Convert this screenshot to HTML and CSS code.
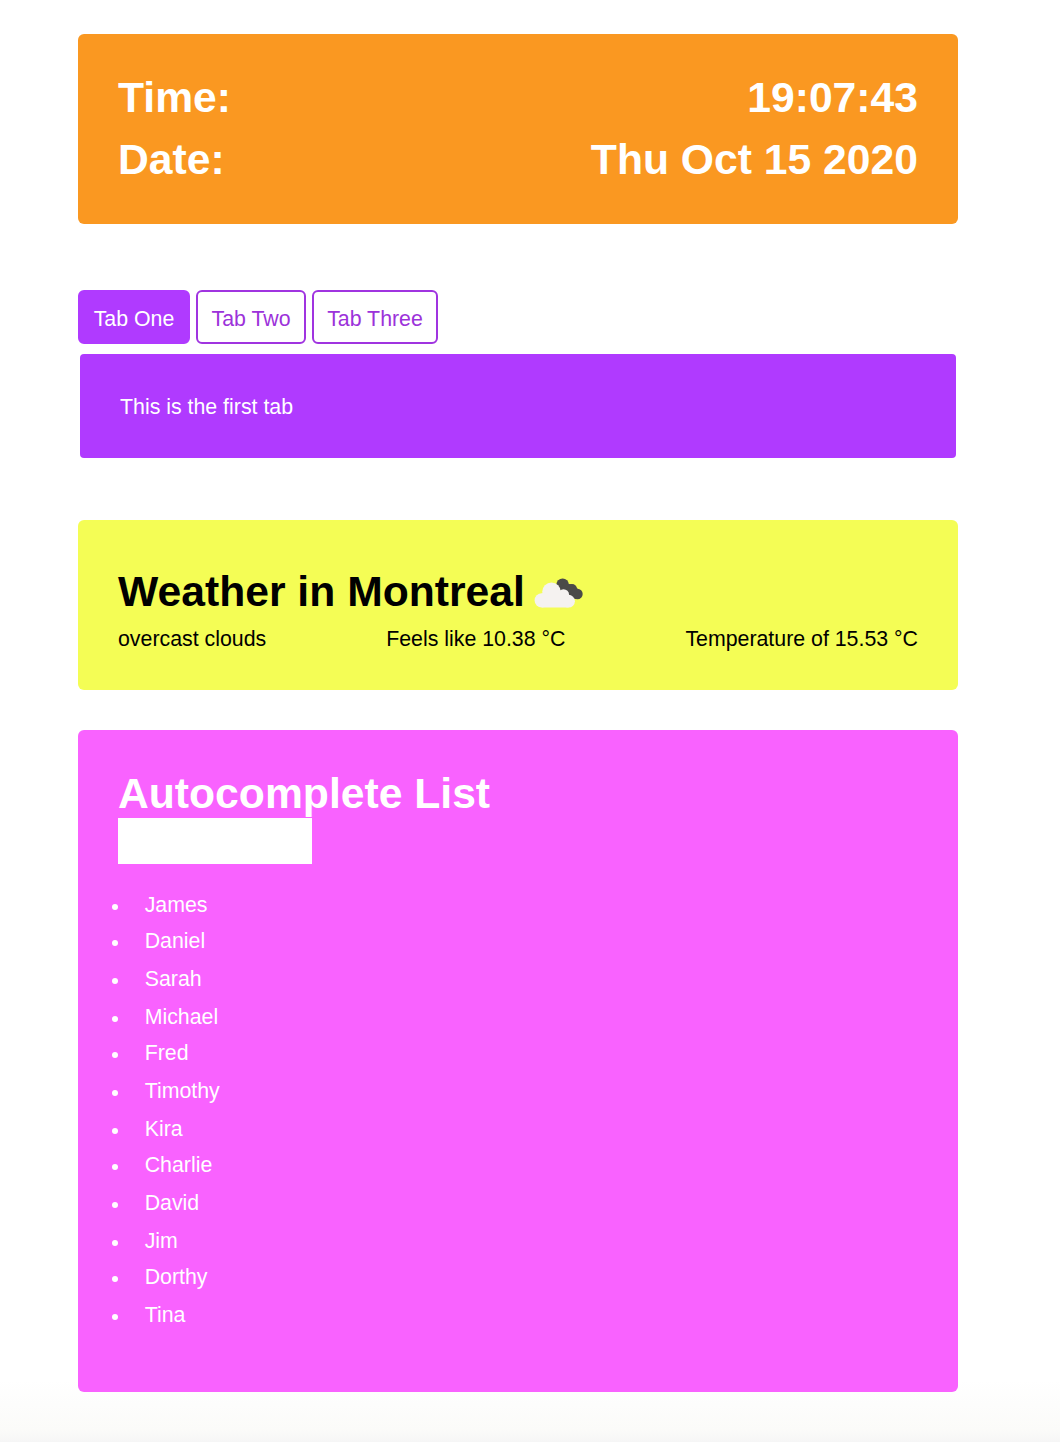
FILE: index.html
```html
<!DOCTYPE html>
<html lang="en">
<head>
<meta charset="utf-8">
<title>Widgets</title>
<link rel="stylesheet" href="styles.css">
</head>
<body>
<main class="page">
  <section class="card clock">
    <div class="clock-row"><span>Time:</span><span>19:07:43</span></div>
    <div class="clock-row"><span>Date:</span><span>Thu Oct 15 2020</span></div>
  </section>

  <section class="tabs">
    <div class="tab-list">
      <button class="tab tab-one active">Tab One</button>
      <button class="tab tab-two">Tab Two</button>
      <button class="tab tab-three">Tab Three</button>
    </div>
    <div class="tab-panel">This is the first tab</div>
  </section>

  <section class="card weather">
    <h1 class="weather-title"><span>Weather in Montreal</span>
      <svg class="cloud" viewBox="0 0 50 32" width="50" height="32">
        <g fill="#4b4a48"><circle cx="28.6" cy="7.8" r="6.3"/><circle cx="38" cy="12" r="5"/><circle cx="43.5" cy="17" r="5.2"/><path d="M30 6L38 7.5L44 12V22H41L26 12Z"/></g>
        <g fill="#f5f2f0"><circle cx="7.8" cy="23.4" r="7.2"/><circle cx="17.5" cy="14.8" r="9.3"/><circle cx="29.5" cy="17.8" r="5.6"/><circle cx="34.5" cy="24.2" r="6.4"/><path d="M7.8 16.2H30L34.5 22V30.6H7.8Z"/></g>
      </svg>
    </h1>
    <div class="weather-row">
      <span>overcast clouds</span><span>Feels like 10.38 °C</span><span>Temperature of 15.53 °C</span>
    </div>
  </section>

  <section class="card autocomplete">
    <h1 class="list-title">Autocomplete List</h1>
    <input class="search" type="text" aria-label="Name">
    <ul class="names">
      <li>James</li><li>Daniel</li><li>Sarah</li><li>Michael</li><li>Fred</li><li>Timothy</li>
      <li>Kira</li><li>Charlie</li><li>David</li><li>Jim</li><li>Dorthy</li><li>Tina</li>
    </ul>
  </section>
</main>
</body>
</html>
```
FILE: styles.css
```css
* { box-sizing: border-box; }

body {
  margin: 0;
  height: 1442px;
  background: linear-gradient(#fff 1380px, #fbfbf9 1430px, #f6f6f6 1442px);
  font: 21.33px/37px "Liberation Sans", Arial, sans-serif;
}

.page { width: 880px; margin-left: 78px; padding-top: 34px; }

.card { border-radius: 6px; padding: 0 40px; }

h1, .clock {
  margin: 0;
  font-size: 42.67px;
  font-weight: bold;
}

.clock {
  height: 190px;
  padding-top: 32px;
  background: #fa9821;
  color: #fff;
  line-height: 62px;
}

.clock-row, .weather-row { display: flex; justify-content: space-between; }

.tabs { margin-top: 66px; }

.tab-list { display: flex; gap: 6px; }

.tab {
  height: 54px;
  padding: 9px 0 4px;
  border: 2px solid #a034e0;
  border-radius: 6px;
  background: #fff;
  color: #9c32da;
  font: inherit;
  line-height: 37px;
}
.tab-one { width: 112px; }
.tab-two { width: 110px; }
.tab-three { width: 126px; }
.tab.active { background: #b03aff; border-color: #b03aff; color: #fff; }

.tab-panel {
  height: 104px;
  margin: 10px 2px 0;
  padding: 35px 40px 0;
  border-radius: 4px;
  background: #b03aff;
  color: #fff;
}

.weather {
  height: 170px;
  margin-top: 62px;
  padding-top: 47px;
  background: #f4fd55;
  color: #000;
}

.weather-title { display: flex; gap: 9px; line-height: 48px; }
.cloud { margin-top: 10px; }
.weather-row { margin-top: 6px; }

.autocomplete {
  height: 662px;
  margin-top: 40px;
  padding-top: 39px;
  background: #f962ff;
  color: #fff;
}

.list-title { line-height: 49px; }

.search {
  display: block;
  width: 194px;
  height: 46px;
  border: 0;
  background: #fff;
}

.names {
  margin: 23px 0 0 -6px;
  padding: 0;
  list-style: none;
}
.names li { display: flex; align-items: flex-start; gap: 26.7px; height: 38px; }
.names li:nth-child(3n+1) { height: 36px; }
.names li::before {
  content: "";
  width: 6px;
  height: 6px;
  margin-top: 17px;
  border-radius: 50%;
  background: #fff;
}
```
